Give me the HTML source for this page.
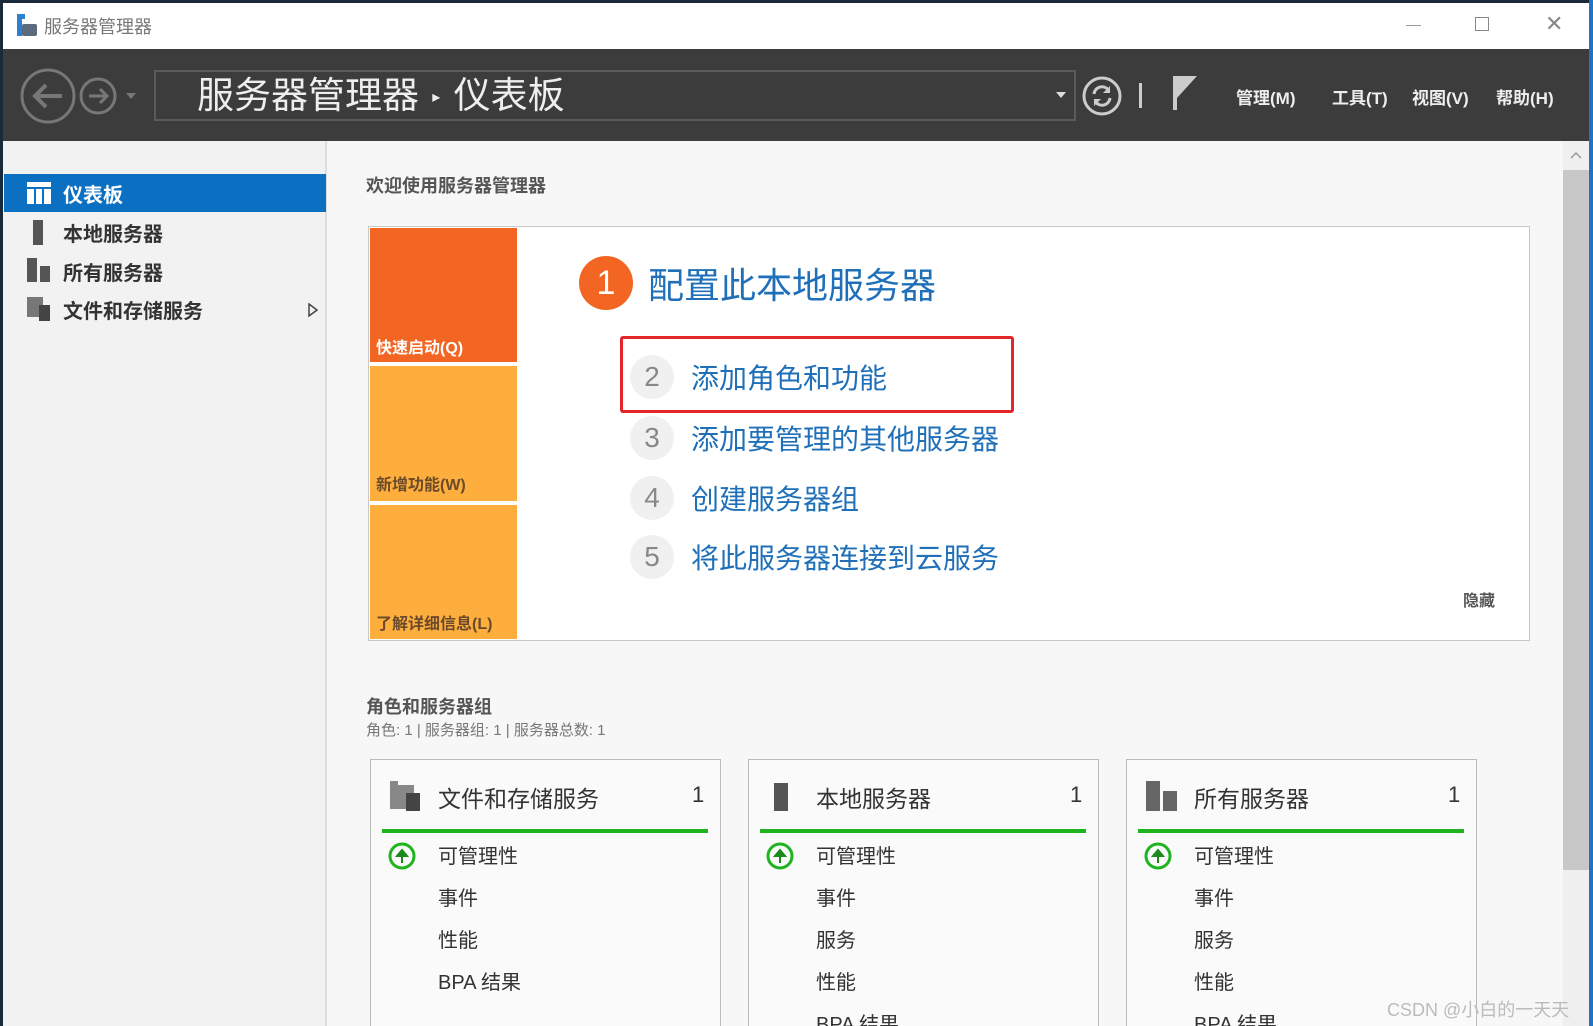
<!DOCTYPE html>
<html><head><meta charset="utf-8">
<style>
*{margin:0;padding:0;box-sizing:border-box}
html{background:#f7f7f7;width:1593px;height:1026px;overflow:hidden}
body{width:1593px;height:1026px;overflow:hidden;background:#f7f7f7;font-family:"Liberation Sans","Noto Sans CJK SC",sans-serif;position:relative}
.a{position:absolute;white-space:nowrap}
.blue{color:#1f70b8}
</style></head><body>
<div class="a" style="left:0;top:0;width:1593px;height:3px;background:#1b2a3a"></div>
<div class="a" style="left:0;top:0;width:3px;height:1026px;background:#1b2a3a"></div>
<div class="a" style="left:3px;top:3px;width:1586px;height:46px;background:#fff"></div>
<div class="a" style="left:17px;top:14px;width:5px;height:22px;background:#2d7fd0"></div>
<div class="a" style="left:17px;top:14px;width:8px;height:5px;background:#2d7fd0"></div>
<div class="a" style="left:22px;top:24px;width:15px;height:12px;background:#5b6b7b;border-radius:2px"></div>
<div class="a" style="left:44px;top:13px;font-size:18px;color:#777">服务器管理器</div>
<div class="a" style="left:1406px;top:25px;width:15px;height:1px;background:#999"></div>
<div class="a" style="left:1475px;top:17px;width:14px;height:14px;border:1px solid #888"></div>
<div class="a" style="left:1545px;top:14px;font-size:22px;color:#888;line-height:20px">✕</div>
<div class="a" style="left:3px;top:49px;width:1586px;height:92px;background:#3c3c3c"></div>
<svg class="a" style="left:18px;top:66px" width="130" height="60">
<circle cx="30" cy="30" r="26" fill="none" stroke="#777" stroke-width="3"/>
<path d="M44 30H17M28 19L17 30L28 41" fill="none" stroke="#777" stroke-width="4"/>
<circle cx="80" cy="30" r="17" fill="none" stroke="#777" stroke-width="3"/>
<path d="M71 30H89M82 23L89 30L82 37" fill="none" stroke="#777" stroke-width="3"/>
<path d="M108 27h10l-5 6z" fill="#777"/>
</svg>
<div class="a" style="left:154px;top:70px;width:922px;height:51px;border:2px solid #5a5a5a;background:#3c3c3c"></div>
<div class="a" style="left:197px;top:72px;font-size:37px;color:#eee;line-height:48px">服务器管理器 <span style="font-size:16px;vertical-align:middle;margin:0 3px">▸</span> 仪表板</div>
<svg class="a" style="left:1055px;top:90px" width="12" height="10"><path d="M1 2h10l-5 6z" fill="#ddd"/></svg>
<svg class="a" style="left:1081px;top:75px" width="150" height="44">
<circle cx="21" cy="21" r="18" fill="none" stroke="#ccc" stroke-width="3"/>
<path d="M13 19a8 8 0 0 1 15-3M29 23a8 8 0 0 1-15 3" fill="none" stroke="#ccc" stroke-width="3"/>
<path d="M29 11v7h-7z M13 31v-7h7z" fill="#ccc"/>
<rect x="58" y="8" width="3" height="25" fill="#ccc"/>
<rect x="92" y="1" width="4" height="34" fill="#ccc"/>
<path d="M96 1h20l-20 22z" fill="#ccc"/>
</svg>
<div class="a" style="left:1236px;top:84px;font-size:17px;color:#eee;font-weight:bold">管理(M)</div>
<div class="a" style="left:1332px;top:84px;font-size:17px;color:#eee;font-weight:bold">工具(T)</div>
<div class="a" style="left:1412px;top:84px;font-size:17px;color:#eee;font-weight:bold">视图(V)</div>
<div class="a" style="left:1496px;top:84px;font-size:17px;color:#eee;font-weight:bold">帮助(H)</div>
<div class="a" style="left:3px;top:141px;width:324px;height:885px;background:#f2f2f2;border-right:2px solid #ddd"></div>
<div class="a" style="left:4px;top:174px;width:322px;height:38px;background:#0b6fc2"></div>
<svg class="a" style="left:27px;top:182px" width="24" height="22"><rect width="24" height="5" fill="#fff"/><rect y="7" width="7" height="15" fill="#fff"/><rect x="9" y="7" width="6" height="15" fill="#fff"/><rect x="17" y="7" width="7" height="15" fill="#fff"/></svg>
<div class="a" style="left:63px;top:179px;font-size:20px;color:#fff;font-weight:bold">仪表板</div>
<div class="a" style="left:33px;top:220px;width:10px;height:25px;background:#555"></div>
<div class="a" style="left:63px;top:218px;font-size:20px;color:#333;font-weight:bold">本地服务器</div>
<svg class="a" style="left:27px;top:258px" width="24" height="24"><rect width="10" height="24" fill="#555"/><rect x="13" y="8" width="10" height="16" fill="#555"/></svg>
<div class="a" style="left:63px;top:257px;font-size:20px;color:#333;font-weight:bold">所有服务器</div>
<svg class="a" style="left:27px;top:297px" width="24" height="24"><rect width="16" height="20" fill="#777"/><rect x="12" y="8" width="11" height="16" fill="#444"/></svg>
<div class="a" style="left:63px;top:295px;font-size:20px;color:#333;font-weight:bold">文件和存储服务</div>
<svg class="a" style="left:308px;top:303px" width="10" height="14"><path d="M1 1l8 6-8 6z" fill="none" stroke="#444" stroke-width="1.5"/></svg>
<div class="a" style="left:366px;top:172px;font-size:18px;font-weight:bold;color:#555">欢迎使用服务器管理器</div>
<div class="a" style="left:368px;top:226px;width:1162px;height:415px;background:#fff;border:1px solid #c8c8c8"></div>
<div class="a" style="left:370px;top:228px;width:147px;height:134px;background:#f26522"></div>
<div class="a" style="left:370px;top:366px;width:147px;height:135px;background:#fdae3d"></div>
<div class="a" style="left:370px;top:505px;width:147px;height:134px;background:#fdae3d"></div>
<div class="a" style="left:376px;top:334px;font-size:16px;color:#fff;font-weight:bold">快速启动(Q)</div>
<div class="a" style="left:376px;top:471px;font-size:16px;color:#6a4a2a;font-weight:bold">新增功能(W)</div>
<div class="a" style="left:376px;top:610px;font-size:16px;color:#6a4a2a;font-weight:bold">了解详细信息(L)</div>
<div class="a" style="left:579px;top:256px;width:54px;height:54px;border-radius:50%;background:#f26522;color:#fff;font-size:34px;text-align:center;line-height:54px">1</div>
<div class="a blue" style="left:648px;top:257px;font-size:36px">配置此本地服务器</div>
<div class="a" style="left:620px;top:336px;width:394px;height:77px;border:3px solid #e4262b;border-radius:3px"></div>
<div class="a" style="left:630px;top:355px;width:44px;height:44px;border-radius:50%;background:#f0f0f0;color:#888;font-size:28px;text-align:center;line-height:44px">2</div>
<div class="a blue" style="left:691px;top:357px;font-size:28px">添加角色和功能</div>
<div class="a" style="left:630px;top:416px;width:44px;height:44px;border-radius:50%;background:#f0f0f0;color:#888;font-size:28px;text-align:center;line-height:44px">3</div>
<div class="a blue" style="left:691px;top:418px;font-size:28px">添加要管理的其他服务器</div>
<div class="a" style="left:630px;top:476px;width:44px;height:44px;border-radius:50%;background:#f0f0f0;color:#888;font-size:28px;text-align:center;line-height:44px">4</div>
<div class="a blue" style="left:691px;top:478px;font-size:28px">创建服务器组</div>
<div class="a" style="left:630px;top:535px;width:44px;height:44px;border-radius:50%;background:#f0f0f0;color:#888;font-size:28px;text-align:center;line-height:44px">5</div>
<div class="a blue" style="left:691px;top:537px;font-size:28px">将此服务器连接到云服务</div>
<div class="a" style="left:1463px;top:587px;font-size:16px;color:#555;font-weight:bold">隐藏</div>
<div class="a" style="left:366px;top:693px;font-size:18px;font-weight:bold;color:#555">角色和服务器组</div>
<div class="a" style="left:366px;top:719px;font-size:15px;color:#777">角色: 1 | 服务器组: 1 | 服务器总数: 1</div>
<div class="a" style="left:370px;top:759px;width:351px;height:280px;background:#fafafa;border:1px solid #bbb"></div>
<div class="a" style="left:748px;top:759px;width:351px;height:280px;background:#fafafa;border:1px solid #bbb"></div>
<div class="a" style="left:1126px;top:759px;width:351px;height:280px;background:#fafafa;border:1px solid #bbb"></div>
<svg class="a" style="left:390px;top:781px" width="32" height="30"><rect x="0" y="0" width="8" height="4" fill="#888"/><rect y="4" width="24" height="24" fill="#888"/><rect x="16" y="12" width="14" height="18" fill="#444"/></svg>
<div class="a" style="left:438px;top:780px;font-size:23px;color:#333">文件和存储服务</div>
<div class="a" style="left:774px;top:783px;width:14px;height:28px;background:#555"></div>
<div class="a" style="left:816px;top:780px;font-size:23px;color:#333">本地服务器</div>
<svg class="a" style="left:1146px;top:781px" width="32" height="30"><rect width="14" height="30" fill="#666"/><rect x="17" y="10" width="14" height="20" fill="#666"/></svg>
<div class="a" style="left:1194px;top:780px;font-size:23px;color:#333">所有服务器</div>
<div class="a" style="left:692px;top:782px;font-size:22px;color:#333">1</div>
<div class="a" style="left:1070px;top:782px;font-size:22px;color:#333">1</div>
<div class="a" style="left:1448px;top:782px;font-size:22px;color:#333">1</div>
<div class="a" style="left:382px;top:829px;width:326px;height:4px;background:#1fb41f"></div>
<div class="a" style="left:760px;top:829px;width:326px;height:4px;background:#1fb41f"></div>
<div class="a" style="left:1138px;top:829px;width:326px;height:4px;background:#1fb41f"></div>
<svg class="a" style="left:388px;top:842px" width="28" height="28"><circle cx="14" cy="14" r="12" fill="none" stroke="#1fb41f" stroke-width="3"/><path d="M14 21V10M9 14l5-6 5 6z" fill="#1a8a1a" stroke="#1a8a1a" stroke-width="2"/></svg>
<svg class="a" style="left:766px;top:842px" width="28" height="28"><circle cx="14" cy="14" r="12" fill="none" stroke="#1fb41f" stroke-width="3"/><path d="M14 21V10M9 14l5-6 5 6z" fill="#1a8a1a" stroke="#1a8a1a" stroke-width="2"/></svg>
<svg class="a" style="left:1144px;top:842px" width="28" height="28"><circle cx="14" cy="14" r="12" fill="none" stroke="#1fb41f" stroke-width="3"/><path d="M14 21V10M9 14l5-6 5 6z" fill="#1a8a1a" stroke="#1a8a1a" stroke-width="2"/></svg>
<div class="a" style="left:438px;top:836px;font-size:20px;color:#333;line-height:42px">可管理性<br>事件<br>性能<br>BPA 结果</div>
<div class="a" style="left:816px;top:836px;font-size:20px;color:#333;line-height:42px">可管理性<br>事件<br>服务<br>性能<br>BPA 结果</div>
<div class="a" style="left:1194px;top:836px;font-size:20px;color:#333;line-height:42px">可管理性<br>事件<br>服务<br>性能<br>BPA 结果</div>
<div class="a" style="left:1563px;top:141px;width:26px;height:885px;background:#efefef"></div>
<div class="a" style="left:1563px;top:170px;width:26px;height:700px;background:#c8c8c8"></div>
<svg class="a" style="left:1569px;top:150px" width="14" height="10"><path d="M2 8l5-5 5 5" fill="none" stroke="#999" stroke-width="1.5"/></svg>
<div class="a" style="left:1589px;top:0;width:4px;height:1026px;background:#1e72c8"></div>
<div class="a" style="left:1387px;top:996px;font-size:18px;color:#bbb">CSDN @小白的一天天</div>
</body></html>
